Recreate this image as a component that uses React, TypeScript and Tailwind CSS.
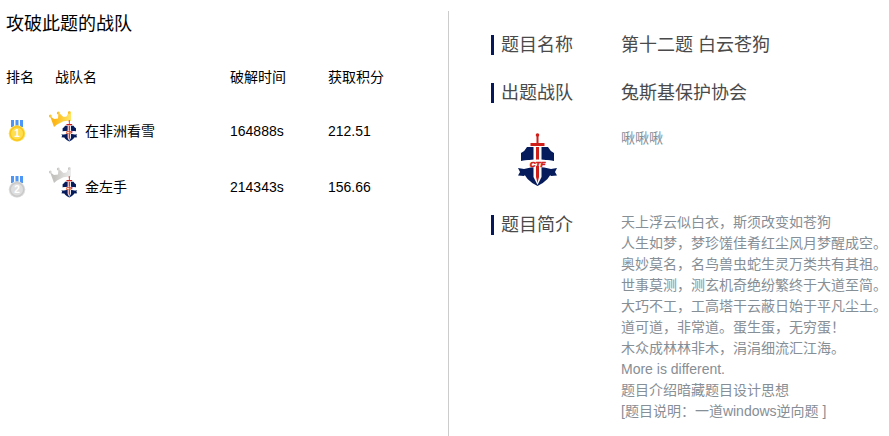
interface Team {
  rank: 1 | 2;
  name: string;
  time: string;
  score: string;
}

const teams: Team[] = [
  { rank: 1, name: '在非洲看雪', time: '164888s', score: '212.51' },
  { rank: 2, name: '金左手', time: '214343s', score: '156.66' },
];

const intro = [
  '天上浮云似白衣，斯须改变如苍狗',
  '人生如梦，梦珍馐佳肴红尘风月梦醒成空。',
  '奥妙莫名，名鸟兽虫蛇生灵万类共有其祖。',
  '世事莫测，测玄机奇绝纷繁终于大道至简。',
  '大巧不工，工高塔干云蔽日始于平凡尘土。',
  '道可道，非常道。蛋生蛋，无穷蛋！',
  '木众成林林非木，涓涓细流汇江海。',
  'More is different.',
  '题目介绍暗藏题目设计思想',
  '[题目说明：一道windows逆向题 ]',
];

const palette = {
  1: { rim: '#fbc520', face: '#ffdf4d', crownFrom: '#fdb515', crownTo: '#ffe766' },
  2: { rim: '#c9c9c9', face: '#dedede', crownFrom: '#c4c2bf', crownTo: '#ededed' },
};

const Shield = ({ className }: { className: string }) => (
  <svg viewBox="0 0 42 54" className={className} aria-hidden="true">
    {/* shield halves */}
    <path d="M10 14h21q2 4 6 6v8q-16-3-33 0v-8q4-2 6-6z" fill="#061b5b" />
    <path d="M5 36h31q-3 11-15.500 17Q8 47 5 36z" fill="#061b5b" />
    {/* ribbon */}
    <path d="M1 35l6 1q13.500-4 27 0l6-1-2 4 2 3.500-6 .500-2-2q-11.500-3-23 0l-2 2-6-.500L3 39z" fill="#061b5b" />
    {/* sword */}
    <path d="M16.500 13h8v31l-4 8-4-8z" fill="#fff" />
    <path d="M19.500 3h2v7h6v3h-14v-3h6z" fill="#cf1f1a" />
    <path d="M19 14h3v30l-1.500 6-1.500-6z" fill="#cf1f1a" />
    <circle cx="20.500" cy="2" r="1.800" fill="#cf1f1a" />
    <path d="M4 28q16.500-3 33 0v6.500q-16.500-3-33 0z" fill="#fff" />
    <text
      x="20.500"
      y="33.500"
      textAnchor="middle"
      fontFamily="Liberation Sans, sans-serif"
      fontSize="8"
      fontWeight="bold"
      fontStyle="italic"
      fill="#cf1f1a"
      stroke="#cf1f1a"
      strokeWidth=".6"
    >
      CTF
    </text>
  </svg>
);

const Medal = ({ rank }: { rank: 1 | 2 }) => (
  <svg viewBox="0 0 18 22" className="ml-0.5 h-[22px] w-[18px]" role="img" aria-label={`第${rank}名`}>
    <path d="M3 0h3v7H3zM7.500 0h3v7h-3zM12 0h3v7h-3z" fill="#4d96f5" />
    <circle cx="9" cy="13.500" r="8.300" fill={palette[rank].face} />
    <circle cx="9" cy="13.500" r="6.700" fill={palette[rank].face} stroke={palette[rank].rim} strokeWidth="1.400" />
    <text
      x="9"
      y="17"
      textAnchor="middle"
      fontFamily="Liberation Sans, sans-serif"
      fontSize="10"
      fontWeight="bold"
      fill="#fff"
    >
      {rank}
    </text>
  </svg>
);

const Crown = ({ rank }: { rank: 1 | 2 }) => (
  <svg viewBox="0 0 22 16" className="absolute -top-2 left-0 h-4 w-[22px]" aria-hidden="true">
    <defs>
      <linearGradient id={`crown-${rank}`}>
        <stop offset=".2" stopColor={palette[rank].crownFrom} />
        <stop offset="1" stopColor={palette[rank].crownTo} />
      </linearGradient>
    </defs>
    <g fill={`url(#crown-${rank})`}>
      <path d="M1 5l4 3 4-.500.500-6 5 4.500 3-.500L20 1h2v9q-7-1-11 2-3 1-6 4z" />
      <circle cx="1.500" cy="5" r="1.500" />
      <circle cx="9.500" cy="2" r="1.600" />
      <circle cx="20.500" cy="1.500" r="1.500" />
    </g>
  </svg>
);

const Label = ({ text }: { text: string }) => (
  <span className="flex h-5 items-center border-l-3 border-[#06175a] pl-[7px] text-lg leading-5 text-[#4a4a4a]">
    {text}
  </span>
);

export default function App() {
  return (
    <main className="grid min-h-screen grid-cols-[449fr_440fr] bg-white pt-[11px] font-['Liberation_Sans','Noto_Sans_CJK_SC',sans-serif] text-sm text-black">
      <section className="border-r border-[#cccccc] pl-1.5">
        <h2 className="pt-px text-lg leading-6">攻破此题的战队</h2>
        <table className="mt-3.5 w-full table-fixed text-left">
          <colgroup>
            <col className="w-[49px]" />
            <col className="w-[175px]" />
            <col className="w-[98px]" />
            <col />
          </colgroup>
          <thead>
            <tr className="h-[53px]">
              <th className="p-0 font-normal">排名</th>
              <th className="p-0 font-normal">战队名</th>
              <th className="p-0 font-normal">破解时间</th>
              <th className="p-0 font-normal">获取积分</th>
            </tr>
          </thead>
          <tbody>
            {teams.map((t) => (
              <tr key={t.rank} className="h-14">
                <td className="p-0">
                  <Medal rank={t.rank} />
                </td>
                <td className="p-0">
                  <div className="-ml-1.5 flex items-center">
                    <span className="relative flex h-6 w-9 items-center pl-3">
                      <Crown rank={t.rank} />
                      <Shield className="relative h-[22px] w-[17px]" />
                    </span>
                    {t.name}
                  </div>
                </td>
                <td className="p-0">{t.time}</td>
                <td className="p-0">{t.score}</td>
              </tr>
            ))}
          </tbody>
        </table>
      </section>

      <section className="pl-[42px] pt-6">
        <dl className="grid grid-cols-[130px_1fr]">
          <dt>
            <Label text="题目名称" />
          </dt>
          <dd className="mb-7 text-lg leading-5 text-[#4a4a4a]">第十二题 白云苍狗</dd>
          <dt>
            <Label text="出题战队" />
          </dt>
          <dd className="text-lg leading-5 text-[#4a4a4a]">兔斯基保护协会</dd>
          <dt className="pb-[25px] pl-[26px] pt-[30px]">
            <Shield className="h-[54px] w-[42px]" />
          </dt>
          <dd className="pt-[25px] leading-[21px] text-[#868e96]">啾啾啾</dd>
          <dt className="pt-[3px]">
            <Label text="题目简介" />
          </dt>
          <dd className="whitespace-pre leading-[21px] text-[#868e96]">
            {intro.map((line) => (
              <p key={line}>{line}</p>
            ))}
          </dd>
        </dl>
      </section>
    </main>
  );
}
